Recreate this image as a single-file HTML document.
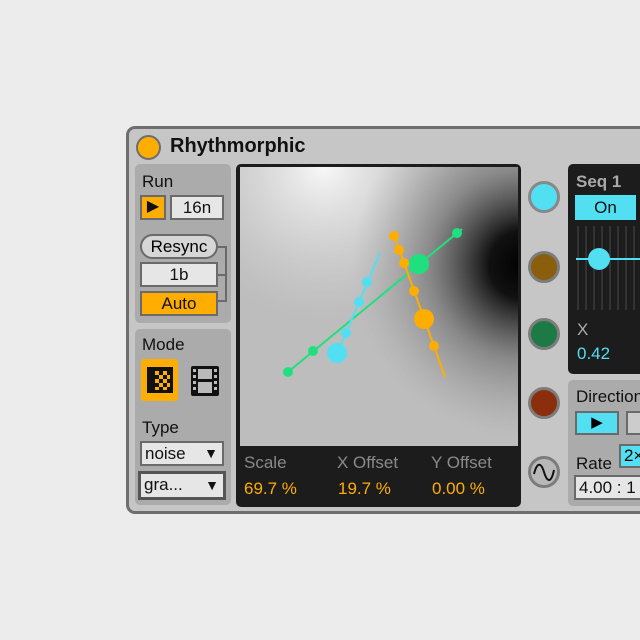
<!DOCTYPE html>
<html><head><style>
*{margin:0;padding:0;box-sizing:border-box}
body{width:640px;height:640px;background:#ececec;position:relative;overflow:hidden;font-family:"Liberation Sans",sans-serif}
.a{position:absolute}
.dev{left:126px;top:126px;width:530px;height:388px;background:#c6c6c6;border:3px solid #6e6e6e;border-radius:9px}
.panel{background:#ababab;border-radius:5px}
.t{font-size:17px;color:#111}
.box{border:2px solid #6a6a6a;background:#e6e6e6;font-size:17px;text-align:center;color:#111}
.or{background:#ffad00}
.cy{background:#52dff2}
.circ{width:32px;height:32px;border-radius:50%;border:3px solid #7c7c7c}
</style></head><body>
<div class="a dev"></div>
<div class="a" style="left:136px;top:135px;width:25px;height:25px;border-radius:50%;background:#ffad00;border:2px solid #6e6e6e"></div>
<div class="a" style="left:170px;top:135px;font-size:20px;font-weight:bold;color:#111">Rhythmorphic</div>

<div class="a panel" style="left:135px;top:164px;width:96px;height:159px"></div>
<div class="a t" style="left:142px;top:172px">Run</div>
<div class="a box or" style="left:140px;top:195px;width:26px;height:25px;font-size:16px;line-height:20px">▶</div>
<div class="a box" style="left:170px;top:195px;width:54px;height:25px;line-height:21px">16n</div>
<div class="a" style="left:140px;top:234px;width:78px;height:25px;border:2px solid #6a6a6a;border-radius:13px;background:#d6d6d6;font-size:17px;text-align:center;line-height:21px">Resync</div>
<div class="a box" style="left:140px;top:262px;width:78px;height:25px;line-height:21px">1b</div>
<div class="a box or" style="left:140px;top:291px;width:78px;height:25px;line-height:21px">Auto</div>
<div class="a" style="left:218px;top:246px;width:9px;height:56px;border:2px solid #6a6a6a;border-left:none"></div>
<div class="a" style="left:218px;top:274px;width:9px;height:2px;background:#6a6a6a"></div>

<div class="a panel" style="left:135px;top:329px;width:96px;height:176px"></div>
<div class="a t" style="left:142px;top:335px">Mode</div>
<div class="a or" style="left:141px;top:359px;width:37px;height:42px;border-radius:3px"></div>
<svg class="a" style="left:147px;top:367px" width="26" height="26">
<rect x="0" y="0" width="26" height="26" fill="#111"/>
<g fill="#ffad00">
<rect x="8" y="4" width="4" height="4"/><rect x="16" y="4" width="4" height="4"/>
<rect x="12" y="8" width="4" height="4"/><rect x="20" y="8" width="3" height="4"/>
<rect x="8" y="12" width="4" height="4"/><rect x="16" y="12" width="4" height="4"/>
<rect x="12" y="16" width="4" height="4"/><rect x="20" y="16" width="3" height="4"/>
<rect x="8" y="20" width="4" height="3"/><rect x="16" y="20" width="4" height="3"/>
</g></svg>
<svg class="a" style="left:190px;top:365px" width="30" height="32">
<rect x="1" y="1" width="28" height="30" rx="2" fill="#111"/>
<rect x="8" y="4" width="14" height="10" fill="#bbb"/><rect x="8" y="17" width="14" height="11" fill="#bbb"/>
<g fill="#bbb"><rect x="3" y="4" width="3" height="3"/><rect x="3" y="10" width="3" height="3"/><rect x="3" y="16" width="3" height="3"/><rect x="3" y="22" width="3" height="3"/>
<rect x="24" y="4" width="3" height="3"/><rect x="24" y="10" width="3" height="3"/><rect x="24" y="16" width="3" height="3"/><rect x="24" y="22" width="3" height="3"/></g>
</svg>
<div class="a t" style="left:142px;top:418px">Type</div>
<div class="a box" style="left:140px;top:441px;width:84px;height:25px;text-align:left;padding-left:3px;line-height:21px">noise<span style="position:absolute;right:4px;font-size:14px">▼</span></div>
<div class="a box" style="left:138px;top:471px;width:88px;height:29px;border:3px solid #555;text-align:left;padding-left:3px;line-height:22px">gra...<span style="position:absolute;right:4px;font-size:14px">▼</span></div>

<div class="a" style="left:236px;top:164px;width:285px;height:343px;background:#1c1c1c;border-radius:5px"></div>
<svg class="a" style="left:240px;top:167px" width="278" height="279">
<defs>
<radialGradient id="d" cx="1.02" cy="0.35" r="0.62"><stop offset="0" stop-color="#000"/><stop offset="0.2" stop-color="#111"/><stop offset="0.55" stop-color="#666" stop-opacity="0.6"/><stop offset="1" stop-color="#999" stop-opacity="0"/></radialGradient>
<radialGradient id="w" cx="0.3" cy="0" r="0.55"><stop offset="0" stop-color="#f8f8f8"/><stop offset="0.5" stop-color="#e0e0e0" stop-opacity="0.6"/><stop offset="1" stop-color="#d0d0d0" stop-opacity="0"/></radialGradient>
</defs>
<rect width="278" height="279" fill="#bdbdbd"/>
<rect width="278" height="279" fill="url(#w)"/>
<rect width="278" height="279" fill="url(#d)"/>
<g transform="translate(-240,-167)">
<line x1="288" y1="372" x2="462" y2="229" stroke="#1fe07e" stroke-width="2"/>
<g fill="#1fe07e"><circle cx="288" cy="372" r="5"/><circle cx="313" cy="351" r="5"/><circle cx="419" cy="264" r="10"/><circle cx="457" cy="233" r="5"/></g>
<line x1="380" y1="253" x2="337" y2="354" stroke="#52dff2" stroke-width="2"/>
<g fill="#52dff2"><circle cx="367" cy="282" r="5"/><circle cx="359" cy="302" r="5"/><circle cx="346" cy="333" r="5"/><circle cx="337" cy="353" r="10"/></g>
<line x1="394" y1="235" x2="445" y2="377" stroke="#ffad00" stroke-width="2"/>
<g fill="#ffad00"><circle cx="394" cy="236" r="5"/><circle cx="399" cy="250" r="5"/><circle cx="404" cy="263" r="5"/><circle cx="414" cy="291" r="5"/><circle cx="424" cy="319" r="10"/><circle cx="434" cy="346" r="5"/></g>
</g></svg>
<div class="a" style="left:244px;top:453px;font-size:17px;color:#8a8a8a">Scale</div>
<div class="a" style="left:337px;top:453px;font-size:17px;color:#8a8a8a">X Offset</div>
<div class="a" style="left:431px;top:453px;font-size:17px;color:#8a8a8a">Y Offset</div>
<div class="a" style="left:244px;top:479px;font-size:17px;color:#ffad00">69.7 %</div>
<div class="a" style="left:338px;top:479px;font-size:17px;color:#ffad00">19.7 %</div>
<div class="a" style="left:432px;top:479px;font-size:17px;color:#ffad00">0.00 %</div>

<div class="a circ" style="left:528px;top:181px;background:#52dff2;border-color:#888"></div>
<div class="a circ" style="left:528px;top:251px;background:#8a5e0c"></div>
<div class="a circ" style="left:528px;top:318px;background:#1c7a45"></div>
<div class="a circ" style="left:528px;top:387px;background:#8a2e0c"></div>
<div class="a circ" style="left:528px;top:456px;background:#b8b8b8"></div>
<svg class="a" style="left:528px;top:456px" width="32" height="32"><path d="M6 18 C9 6,13 6,16 16 S23 28,26 14" fill="none" stroke="#111" stroke-width="2"/></svg>

<div class="a" style="left:568px;top:164px;width:80px;height:210px;background:#1c1c1c;border-radius:5px"></div>
<div class="a" style="left:576px;top:172px;font-size:17px;font-weight:bold;color:#aaa">Seq 1</div>
<div class="a cy" style="left:575px;top:195px;width:61px;height:25px;font-size:17px;text-align:center;line-height:25px;color:#111">On</div>
<div class="a" style="left:577px;top:226px;width:63px;height:84px;background:repeating-linear-gradient(90deg,#333 0 2px,transparent 2px 8px)"></div>
<div class="a" style="left:576px;top:258px;width:64px;height:2px;background:#52dff2"></div>
<div class="a" style="left:588px;top:248px;width:22px;height:22px;border-radius:50%;background:#52dff2"></div>
<div class="a" style="left:577px;top:320px;font-size:17px;color:#aaa">X</div>
<div class="a" style="left:577px;top:344px;font-size:17px;color:#52dff2">0.42</div>

<div class="a panel" style="left:568px;top:380px;width:80px;height:126px"></div>
<div class="a t" style="left:576px;top:387px">Direction</div>
<div class="a cy" style="left:575px;top:411px;width:44px;height:24px;border:2px solid #6a6a6a;font-size:15px;text-align:center;line-height:20px">▶</div>
<div class="a" style="left:626px;top:411px;width:20px;height:24px;border:2px solid #6a6a6a;background:#ccc"></div>
<div class="a t" style="left:576px;top:454px">Rate</div>
<div class="a cy" style="left:619px;top:444px;width:30px;height:24px;border:2px solid #6a6a6a;font-size:17px;padding-left:3px;line-height:20px">2×</div>
<div class="a box" style="left:574px;top:475px;width:72px;height:25px;text-align:left;padding-left:3px;line-height:21px">4.00 : 1</div>
</body></html>
